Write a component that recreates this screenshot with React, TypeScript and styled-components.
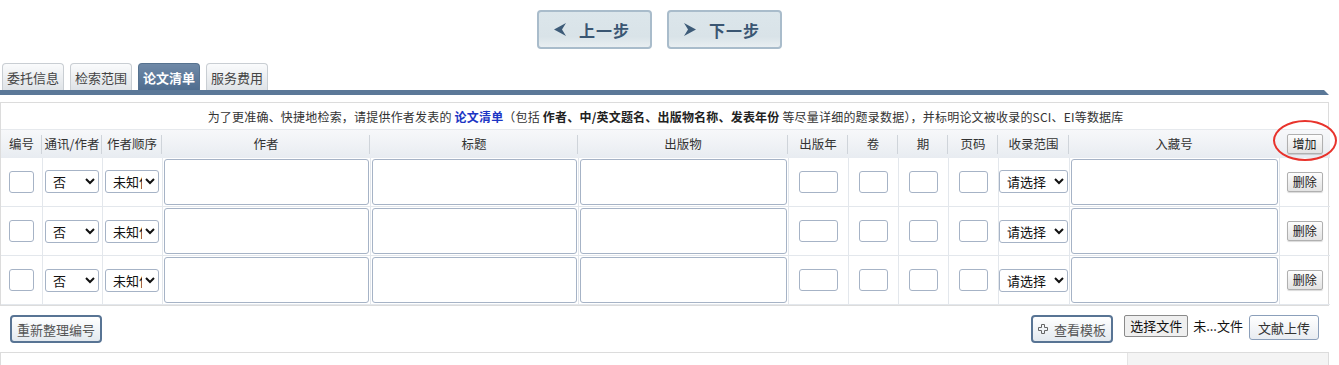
import styled, { createGlobalStyle } from "styled-components"

const GlobalStyle = createGlobalStyle`
  body {
    margin: 0;
    background: #fff;
    color: #333;
    font-family: "Noto Sans CJK SC", "Noto Sans", sans-serif;
    font-size: 12px;
  }
`

const COLS = [41, 60, 60, 208, 208, 210, 60, 50, 50, 50, 71, 210, 51]
const HEADS = ["编号", "通讯/作者", "作者顺序", "作者", "标题", "出版物", "出版年", "卷", "期", "页码", "收录范围", "入藏号"]
const ROWS = [1, 2, 3]

const ArrowLeft = () => (
  <svg width="12" height="13" viewBox="0 0 12 13">
    <path d="M0 6.5 L12 0 L8 6.5 L12 13 Z" fill="#3d5b78" />
  </svg>
)

const ArrowRight = () => (
  <svg width="12" height="13" viewBox="0 0 12 13">
    <path d="M12 6.5 L0 0 L4 6.5 L0 13 Z" fill="#3d5b78" />
  </svg>
)

const CrossIcon = () => (
  <svg width="10" height="10" viewBox="0 0 10 10">
    <path d="M3.5 0.5 H6.5 V3.5 H9.5 V6.5 H6.5 V9.5 H3.5 V6.5 H0.5 V3.5 H3.5 Z" fill="none" stroke="#666" strokeWidth="1" strokeLinejoin="round" />
  </svg>
)

const App = () => {
  return (
    <Page>
      <GlobalStyle />
      <StepNav>
        <StepButton>
          <ArrowLeft />
          <span>上一步</span>
        </StepButton>
        <StepButton>
          <ArrowRight />
          <span>下一步</span>
        </StepButton>
      </StepNav>

      <TabBar>
        <Tab>委托信息</Tab>
        <Tab>检索范围</Tab>
        <Tab $active>论文清单</Tab>
        <Tab>服务费用</Tab>
      </TabBar>
      <TabLine />

      <Panel>
        <Sheet>
          <colgroup>
            {COLS.map((w, i) => (
              <col key={i} style={{ width: w }} />
            ))}
          </colgroup>
          <tbody>
            <tr>
              <Notice colSpan={13}>
                为了更准确、快捷地检索，请提供作者发表的 <Hl>论文清单</Hl>（包括 <b>作者、中/英文题名、出版物名称、发表年份</b> 等尽量详细的题录数据），并标明论文被收录的SCI、EI等数据库
              </Notice>
            </tr>
            <HeadRow>
              {HEADS.map((h, i) => (
                <HeadCell key={h} $sep={i < 11}>
                  {h}
                </HeadCell>
              ))}
              <HeadCell>
                <GrayButton>增加</GrayButton>
              </HeadCell>
            </HeadRow>
            {ROWS.map((r) => (
              <DataRow key={r}>
                <Cell>
                  <Box $w={25} />
                </Cell>
                <Cell>
                  <Pick $w={54} defaultValue="否">
                    <option>否</option>
                    <option>是</option>
                  </Pick>
                </Cell>
                <Cell>
                  <Pick $w={54} defaultValue="未知作者">
                    <option>未知作者</option>
                    <option>第一作者</option>
                  </Pick>
                </Cell>
                <Cell $tight>
                  <Area />
                </Cell>
                <Cell $tight>
                  <Area />
                </Cell>
                <Cell $tight>
                  <Area />
                </Cell>
                <Cell>
                  <Box $w={39} />
                </Cell>
                <Cell>
                  <Box $w={29} />
                </Cell>
                <Cell>
                  <Box $w={29} />
                </Cell>
                <Cell>
                  <Box $w={29} />
                </Cell>
                <Cell>
                  <Pick $w={69} defaultValue="请选择">
                    <option>请选择</option>
                    <option>SCI</option>
                    <option>EI</option>
                  </Pick>
                </Cell>
                <Cell $tight>
                  <Area />
                </Cell>
                <Cell>
                  <GrayButton>删除</GrayButton>
                </Cell>
              </DataRow>
            ))}
          </tbody>
        </Sheet>
        <Ring />
      </Panel>

      <Actions>
        <BlueButton>重新整理编号</BlueButton>
        <RightGroup>
          <BlueButton>
            <CrossIcon />
            查看模板
          </BlueButton>
          <FileButton>选择文件</FileButton>
          <FileName>未...文件</FileName>
          <UploadButton>文献上传</UploadButton>
        </RightGroup>
      </Actions>

      <BottomBox>
        <BottomSide />
      </BottomBox>
    </Page>
  )
}

export default App

const Page = styled.div`
  width: 1329px;
  padding-right: 10px;
`

const StepNav = styled.div`
  display: flex;
  justify-content: center;
  gap: 15px;
  padding: 10px 10px 0 0;
  height: 48px;
`

const StepButton = styled.button`
  width: 115px;
  height: 39px;
  display: flex;
  align-items: center;
  gap: 11px;
  padding: 0 0 0 15px;
  border: 2px solid #a9bccb;
  border-radius: 4px;
  background: linear-gradient(#dce6eb 0%, #d9e3e8 70%, #e8eef1 100%);
  color: #3a5672;
  font-family: "Noto Sans CJK SC", sans-serif;
  font-size: 16px;
  font-weight: bold;
  letter-spacing: 1px;
  span {
    margin-left: 2px;
  }
`

const TabBar = styled.div`
  display: flex;
  gap: 6px;
  padding: 5px 0 0 2px;
  height: 27px;
  box-sizing: content-box;
`

const Tab = styled.div<{ $active?: boolean }>`
  height: 27px;
  box-sizing: border-box;
  padding: 0 4px;
  display: flex;
  align-items: center;
  font-size: 13px;
  border: 1px solid ${(p) => (p.$active ? "#56728f" : "#c9ced3")};
  border-bottom: none;
  border-radius: 4px 4px 0 0;
  background: ${(p) =>
    p.$active ? "linear-gradient(#6f89a7, #4f6d8f)" : "linear-gradient(#fafbfc, #dfe3e7)"};
  color: ${(p) => (p.$active ? "#fff" : "#444")};
  font-weight: ${(p) => (p.$active ? "bold" : "normal")};
`

const TabLine = styled.div`
  height: 5px;
  background: #5b7898;
  clip-path: polygon(0 0, calc(100% - 5px) 0, 100% 100%, 0 100%);
`

const Panel = styled.div`
  position: relative;
  margin-top: 7px;
  border: 1px solid #dcdcdc;
`

const Sheet = styled.table`
  width: 100%;
  table-layout: fixed;
  border-collapse: collapse;
`

const Notice = styled.td`
  height: 26px;
  text-align: center;
  font-size: 12px;
  letter-spacing: 0.2px;
  color: #333;
  padding: 0;
  border-bottom: 1px solid #e6e9ed;
  b {
    color: #222;
  }
`

const Hl = styled.b`
  color: #1c35c4 !important;
`

const HeadRow = styled.tr`
  height: 28px;
  background: linear-gradient(#f7f8fa, #e8ecf1);
`

const HeadCell = styled.th<{ $sep?: boolean }>`
  position: relative;
  padding: 0;
  font-size: 12.5px;
  font-weight: normal;
  color: #333;
  text-align: center;
  white-space: nowrap;
  &::after {
    content: "";
    display: ${(p) => (p.$sep ? "block" : "none")};
    position: absolute;
    right: 0;
    top: 5px;
    bottom: 4px;
    width: 1px;
    background: #cfd4da;
  }
`

const DataRow = styled.tr`
  height: 49px;
`

const Cell = styled.td<{ $tight?: boolean }>`
  padding: ${(p) => (p.$tight ? "1px" : "0")};
  border: 1px solid #e3e7ec;
  border-top: none;
  text-align: center;
  vertical-align: middle;
  &:first-child {
    border-left: none;
  }
  &:last-child {
    border-right: none;
  }
`

const Box = styled.input<{ $w: number }>`
  width: ${(p) => p.$w}px;
  height: 22px;
  box-sizing: border-box;
  border: 1px solid #a6b3c6;
  border-radius: 3px;
  background: #fff;
  display: block;
  margin: 0 auto;
`

const Pick = styled.select<{ $w: number }>`
  width: ${(p) => p.$w}px;
  height: 23px;
  box-sizing: border-box;
  border: 1px solid #a6b3c6;
  border-radius: 3px;
  background: #fff;
  color: #111;
  font-family: "Noto Sans CJK SC", sans-serif;
  font-size: 13px;
  padding: 0 0 0 3px;
  display: block;
  margin: 0 auto;
`

const Area = styled.textarea`
  display: block;
  width: 100%;
  height: 46px;
  box-sizing: border-box;
  border: 1px solid #a6b3c6;
  border-radius: 3px;
  resize: none;
  background: #fff;
`

const GrayButton = styled.button`
  height: 20px;
  padding: 0 5px;
  border: 1px solid #b0b0b0;
  border-radius: 2px;
  background: linear-gradient(#fdfdfd, #e3e3e3);
  box-shadow: 0 1px 1px rgba(0, 0, 0, 0.15);
  color: #222;
  font-family: "Noto Sans CJK SC", sans-serif;
  font-size: 12px;
  line-height: 18px;
`

const Ring = styled.div`
  position: absolute;
  left: 1272px;
  top: 17px;
  width: 64px;
  height: 41px;
  border: 2px solid #e8332c;
  border-radius: 50%;
  box-sizing: border-box;
  pointer-events: none;
`

const Actions = styled.div`
  display: flex;
  justify-content: space-between;
  align-items: flex-start;
  padding: 9px 10px 0 10px;
  height: 37px;
`

const RightGroup = styled.div`
  display: flex;
  align-items: flex-start;
  gap: 5px;
  & > button:first-child {
    margin-right: 6px;
  }
`

const BlueButton = styled.button`
  height: 28px;
  display: flex;
  align-items: center;
  gap: 6px;
  padding: 0 5px;
  border: 2px solid #587494;
  border-radius: 4px;
  background: linear-gradient(#ffffff, #e3e9ef);
  color: #555;
  font-family: "Noto Sans CJK SC", sans-serif;
  font-size: 13px;
`

const FileButton = styled.button`
  height: 22px;
  padding: 0 5px;
  border: 1px solid #8a8a8a;
  border-radius: 2px;
  background: #efefef;
  color: #111;
  font-family: "Noto Sans CJK SC", sans-serif;
  font-size: 13px;
  line-height: 20px;
`

const FileName = styled.span`
  font-size: 13px;
  color: #111;
  line-height: 22px;
  margin-right: 1px;
`

const UploadButton = styled.button`
  height: 25px;
  padding: 0 8px;
  border: 1px solid #8b9fba;
  border-radius: 3px;
  background: linear-gradient(#ffffff, #e8ecf1);
  color: #333;
  font-family: "Noto Sans CJK SC", sans-serif;
  font-size: 13px;
`

const BottomBox = styled.div`
  display: flex;
  justify-content: flex-end;
  height: 12px;
  border: 1px solid #dcdcdc;
  border-bottom: none;
`

const BottomSide = styled.div`
  width: 200px;
  background: #f4f4f4;
  border-left: 1px solid #e4e4e4;
`
